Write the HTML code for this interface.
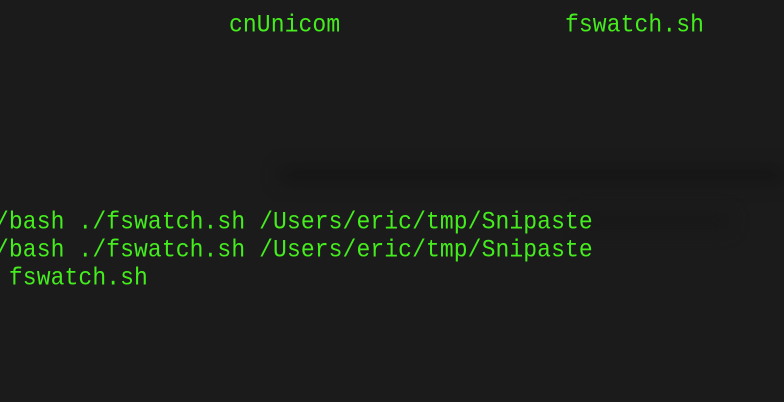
<!DOCTYPE html>
<html><head><style>
html,body{margin:0;padding:0;width:784px;height:402px;overflow:hidden;background:#1b1b1b;}
.t{position:absolute;font-family:"Liberation Mono",monospace;font-size:23px;line-height:26px;color:#45ec1e;white-space:pre;letter-spacing:0.1px;transform:scaleY(1.08);transform-origin:0 0;}
.b{position:absolute;background:#151515;filter:blur(8px);}
</style></head><body>
<div class="b" style="left:280px;top:167px;width:504px;height:16px;"></div>
<div class="b" style="left:580px;top:212px;width:150px;height:18px;background:#181818;"></div>
<div class="t" style="left:-5px;top:208px;">/bash ./fswatch.sh /Users/eric/tmp/Snipaste
/bash ./fswatch.sh /Users/eric/tmp/Snipaste
 fswatch.sh</div>
<div class="t" style="left:229px;top:11px;">cnUnicom</div>
<div class="t" style="left:565px;top:11px;">fswatch.sh</div>
</body></html>
